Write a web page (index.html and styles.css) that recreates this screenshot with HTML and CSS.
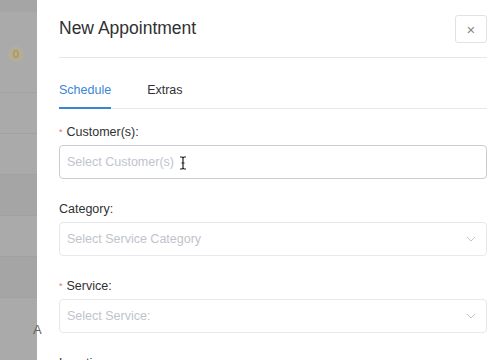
FILE: index.html
```html
<!DOCTYPE html>
<html lang="en">
<head>
    <meta charset="UTF-8">
    <meta name="viewport" content="width=device-width, initial-scale=1.0">
    <title>New Appointment</title>
    <link rel="stylesheet" href="styles.css">
</head>
<body>
    <div class="backdrop">
        <div class="bg-top"></div>
        <div class="bg-badge">0</div>
        <div class="bg-row"></div>
        <div class="bg-row"></div>
        <div class="bg-row dark"></div>
        <div class="bg-row"></div>
        <div class="bg-row dark"></div>
        <div class="bg-row"></div>
        <div class="bg-letter">A</div>
    </div>

    <div class="drawer">
        <div class="drawer-header">
            <h2 class="drawer-title">New Appointment</h2>
            <button type="button" class="close-btn">&times;</button>
        </div>

        <div class="tabs">
            <div class="tab active">Schedule</div>
            <div class="tab">Extras</div>
        </div>

        <form class="form">
            <div class="form-group">
                <label class="required">Customer(s):</label>
                <div class="input-wrap">
                    <input type="text" class="field" placeholder="Select Customer(s)">
                    <svg class="ibeam" width="8" height="14" viewBox="0 0 8 14">
                        <path d="M1 1h2l1 1 1-1h2M4 2v10M1 13h2l1-1 1 1h2M2.5 7h3" fill="none" stroke="#222" stroke-width="1.2"/>
                    </svg>
                </div>
            </div>
            <div class="form-group">
                <label>Category:</label>
                <div class="select">
                    <span class="placeholder">Select Service Category</span>
                    <svg class="chevron" width="10" height="6" viewBox="0 0 10 6"><path d="M1 1l4 4 4-4" fill="none" stroke="#c0c4cc" stroke-width="1"/></svg>
                </div>
            </div>
            <div class="form-group">
                <label class="required">Service:</label>
                <div class="select">
                    <span class="placeholder">Select Service:</span>
                    <svg class="chevron" width="10" height="6" viewBox="0 0 10 6"><path d="M1 1l4 4 4-4" fill="none" stroke="#c0c4cc" stroke-width="1"/></svg>
                </div>
            </div>
            <div class="form-group">
                <label>Location:</label>
            </div>
        </form>
    </div>
</body>
</html>
```

FILE: styles.css
```css
html, body {
    margin: 0;
    padding: 0;
    height: 100%;
    overflow: hidden;
}
body {
    font-family: 'Liberation Sans', Arial, sans-serif;
    display: flex;
    background: #fff;
}
.backdrop {
    width: 37px;
    flex-shrink: 0;
    background: #aaaaaa;
    position: relative;
    display: flex;
    flex-direction: column;
}
.bg-top {
    height: 12px;
    background: #a5a5a5;
    margin-bottom: 34px;
}
.bg-badge {
    width: 16px;
    height: 16px;
    margin-left: 8px;
    border-radius: 50%;
    background: #b3ad9c;
    color: #c08a1e;
    font-size: 11px;
    line-height: 16px;
    text-align: center;
    margin-bottom: 30px;
}
.bg-row {
    height: 40px;
    border-top: 1px solid #a1a1a1;
}
.bg-row.dark {
    background: #a5a5a5;
}
.bg-letter {
    position: absolute;
    left: 33px;
    top: 322px;
    font-size: 13px;
    color: #666;
}
.drawer {
    flex: 1;
    padding: 0 13px 0 22px;
    background: #fff;
}
.drawer-header {
    display: flex;
    align-items: center;
    justify-content: space-between;
    height: 57px;
    border-bottom: 1px solid #e4e7ed;
}
.drawer-title {
    margin: 0;
    font-size: 17.5px;
    font-weight: normal;
    color: #303133;
}
.close-btn {
    width: 32px;
    height: 28px;
    margin-top: 1px;
    border: 1px solid #e2e2e2;
    border-radius: 3px;
    background: #fff;
    color: #8a8a8a;
    font-size: 15px;
    line-height: 1;
    padding: 0;
    font-family: 'Liberation Sans', Arial, sans-serif;
}
.tabs {
    display: flex;
    gap: 36px;
    margin-top: 22px;
    border-bottom: 1px solid #e4e7ed;
}
.tab {
    font-size: 12.5px;
    color: #303133;
    line-height: 20px;
    padding-bottom: 7px;
    border-bottom: 2px solid transparent;
    margin-bottom: -1px;
}
.tab.active {
    color: #3a86d6;
    border-bottom-color: #3a86d6;
}
.form {
    padding-top: 14px;
}
.form-group {
    margin-bottom: 21px;
}
.form-group label {
    display: block;
    font-size: 12.5px;
    line-height: 18px;
    color: #303133;
    margin-bottom: 4px;
}
.form-group label.required::before {
    content: "*";
    color: #f56c6c;
    font-size: 9px;
    vertical-align: top;
    margin-right: 4px;
}
.input-wrap {
    position: relative;
}
.field,
.select {
    box-sizing: border-box;
    width: 100%;
    height: 34px;
    border: 1px solid #dcdfe6;
    border-radius: 4px;
    font-size: 12.5px;
    font-family: 'Liberation Sans', Arial, sans-serif;
    padding: 0 7px;
    outline: none;
    background: #fff;
}
.field {
    border-color: #c9ccd2;
}
.field::placeholder,
.placeholder {
    color: #c0c4cc;
}
.select {
    display: flex;
    align-items: center;
    justify-content: space-between;
    border-color: #e6e8ec;
    padding-right: 10px;
}
.ibeam {
    position: absolute;
    left: 120px;
    top: 11px;
}
```
